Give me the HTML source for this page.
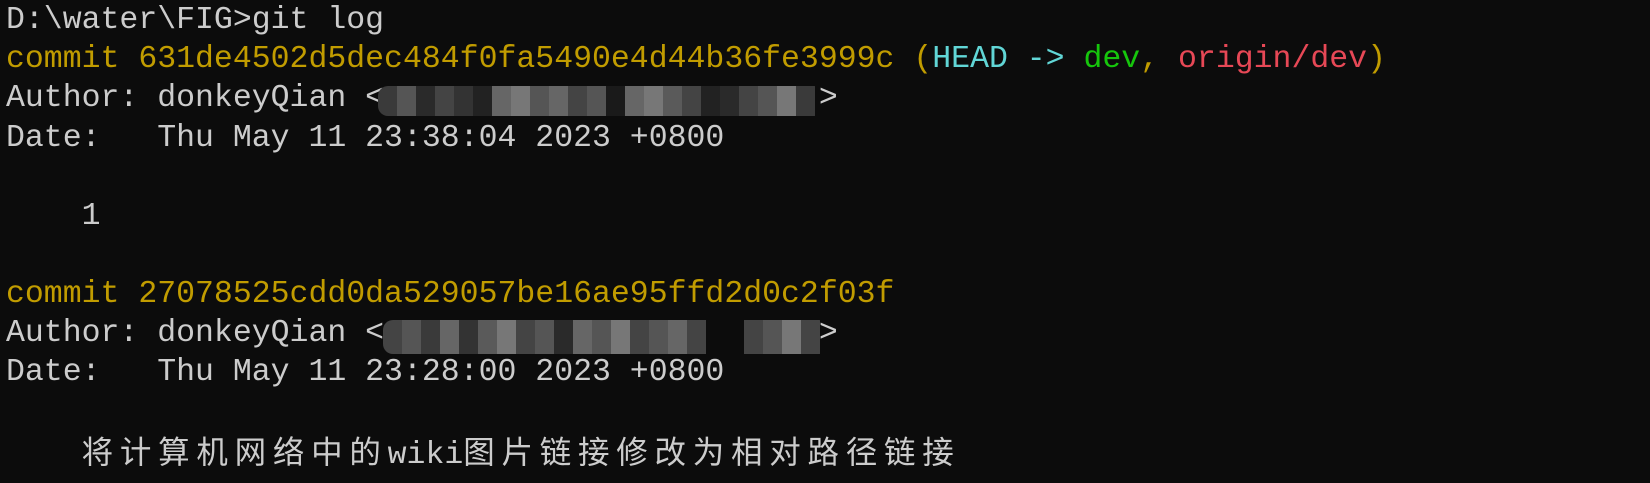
<!DOCTYPE html>
<html><head><meta charset="utf-8"><style>
html,body{margin:0;padding:0;background:#0c0c0c;width:1650px;height:483px;overflow:hidden}
.l{position:absolute;left:6px;height:39px;line-height:39px;font-family:"Liberation Mono","Noto Sans CJK SC",monospace;font-size:31.5px;color:#cccccc;white-space:pre}
.y{color:#c19c00}.c{color:#61d6d6}.g{color:#16c60c}.r{color:#e74856}
.cj{font-family:"Noto Sans CJK SC",sans-serif;letter-spacing:6.75px;font-size:31.5px}
.m{position:absolute;display:flex;border-radius:10px;overflow:hidden}
.m i{display:block;width:19px;height:100%}
</style></head><body>
<div class="l" style="top:1px">D:\water\FIG&gt;git log</div>
<div class="l" style="top:40px"><span class="y">commit 631de4502d5dec484f0fa5490e4d44b36fe3999c (</span><span class="c">HEAD -&gt; </span><span class="g">dev</span><span class="y">, </span><span class="r">origin/dev</span><span class="y">)</span></div>
<div class="l" style="top:79px">Author: donkeyQian &lt;                       &gt;</div>
<div class="m" style="left:378px;top:86px;height:30px;width:446px">
<i style="background:#3a3a3a"></i><i style="background:#555"></i><i style="background:#2a2a2a"></i><i style="background:#444"></i><i style="background:#333"></i><i style="background:#222"></i><i style="background:#666"></i><i style="background:#777"></i><i style="background:#555"></i><i style="background:#666"></i><i style="background:#444"></i><i style="background:#555"></i><i style="background:#1a1a1a"></i><i style="background:#666"></i><i style="background:#777"></i><i style="background:#5a5a5a"></i><i style="background:#444"></i><i style="background:#222"></i><i style="background:#2a2a2a"></i><i style="background:#444"></i><i style="background:#555"></i><i style="background:#777"></i><i style="background:#3a3a3a"></i></div>
<div class="l" style="top:119px">Date:   Thu May 11 23:38:04 2023 +0800</div>
<div class="l" style="top:197px">    1</div>
<div class="l y" style="top:275px">commit 27078525cdd0da529057be16ae95ffd2d0c2f03f</div>
<div class="l" style="top:314px">Author: donkeyQian &lt;                       &gt;</div>
<div class="m" style="left:383px;top:320px;height:34px;width:446px">
<i style="background:#444"></i><i style="background:#555"></i><i style="background:#3a3a3a"></i><i style="background:#666"></i><i style="background:#333"></i><i style="background:#5a5a5a"></i><i style="background:#777"></i><i style="background:#444"></i><i style="background:#555"></i><i style="background:#2a2a2a"></i><i style="background:#666"></i><i style="background:#555"></i><i style="background:#777"></i><i style="background:#444"></i><i style="background:#555"></i><i style="background:#666"></i><i style="background:#444"></i><i style="background:#0c0c0c"></i><i style="background:#0c0c0c"></i><i style="background:#444"></i><i style="background:#555"></i><i style="background:#777"></i><i style="background:#444"></i></div>
<div class="l" style="top:353px">Date:   Thu May 11 23:28:00 2023 +0800</div>
<div class="l" style="top:431px">    <span class="cj">将计算机网络中的</span>wiki<span class="cj">图片链接修改为相对路径链接</span></div>
</body></html>
